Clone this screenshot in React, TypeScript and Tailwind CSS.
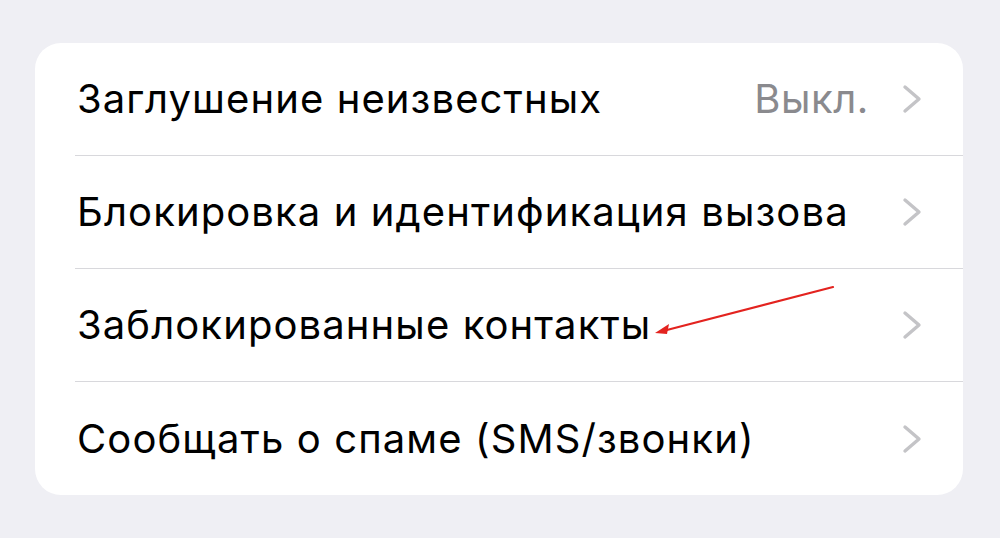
import React from "react";

type Row = { label: string; value?: string };

const rows: Row[] = [
  { label: "Заглушение неизвестных", value: "Выкл." },
  { label: "Блокировка и идентификация вызова" },
  { label: "Заблокированные контакты" },
  { label: "Сообщать о спаме (SMS/звонки)" },
];

function Chevron() {
  return (
    <svg width="20" height="30" viewBox="0 0 20 30" fill="none" className="shrink-0">
      <path
        d="M3 3 L17 15 L3 27"
        stroke="#c4c4c7"
        strokeWidth="3.4"
        strokeLinecap="round"
        strokeLinejoin="round"
      />
    </svg>
  );
}

export default function App() {
  return (
    <div
      className="w-[1000px] h-[538px] bg-[#efeff4] pl-[35px] pr-[37px] pt-[43px]"
      style={{ fontFamily: 'Inter, "Liberation Sans", Arial, sans-serif' }}
    >
      <div className="relative bg-white rounded-[26px] pl-[40px] overflow-hidden">
        {rows.map((r, i) => (
          <div
            key={r.label}
            className={`flex items-center h-[113px] pr-[41px] ${i < rows.length - 1 ? "border-b border-[#d8d8dc]" : ""}`}
          >
            <span className="flex-1 pl-[2px] text-[40px] leading-none text-black tracking-[1.1px]">{r.label}</span>
            {r.value && <span className="text-[40px] leading-none text-[#8a8a8e] mr-[33px] tracking-[0.6px]">{r.value}</span>}
            <Chevron />
          </div>
        ))}
        <svg className="absolute left-0 top-0 pointer-events-none" width="928" height="452" viewBox="0 0 928 452">
          <line x1="798" y1="244" x2="628" y2="288" stroke="#e3231f" strokeWidth="2.2" strokeLinecap="round" />
          <path d="M620 290 L634 281 L632 291 Z" fill="#e3231f" />
        </svg>
      </div>
    </div>
  );
}
